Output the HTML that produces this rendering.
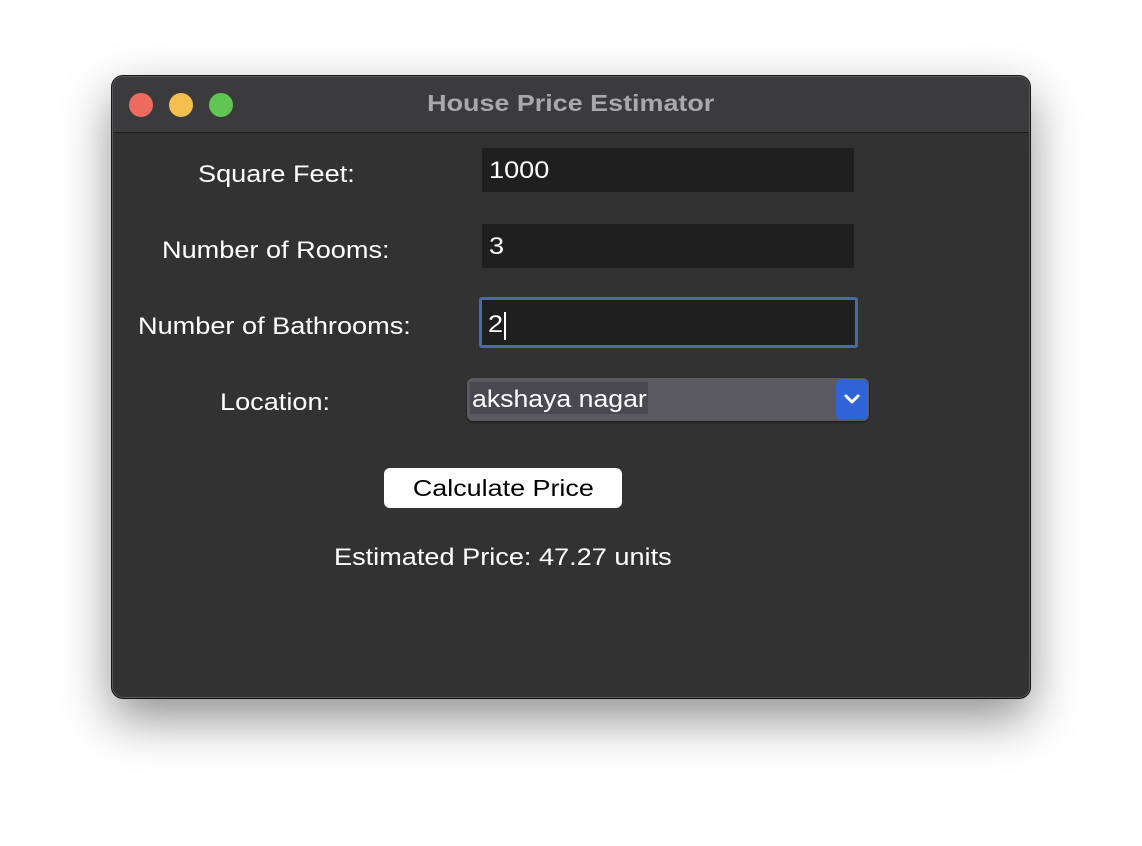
<!DOCTYPE html>
<html><head><style>
body{margin:0;width:1142px;height:846px;background:#fff;position:relative;overflow:hidden;font-family:"Liberation Sans",sans-serif;}
.win{position:absolute;left:112px;top:76px;width:916px;height:620px;background:#323232;border:1px solid #5a5a5a;border-radius:11px;box-shadow:0 20px 50px rgba(0,0,0,0.45),0 0 0 1px #1a1a1a;overflow:hidden;}
.tb{position:absolute;left:0;top:0;width:100%;height:55px;background:#3b3b3d;border-bottom:1px solid #1c1c1c;}
.dot{position:absolute;top:16px;width:24px;height:24px;border-radius:50%;}
.title{position:absolute;left:0;width:100%;top:13px;text-align:center;font-weight:bold;font-size:23px;color:#a9a9ab;}
.title span{display:inline-block;transform:scaleX(1.17);}
.t{position:absolute;color:#fff;font-size:24px;transform:scaleX(1.13);transform-origin:left;white-space:nowrap;}
.e{position:absolute;background:#1f1f1f;color:#fff;font-size:24px;box-sizing:border-box;padding-left:7px;}
.s{display:inline-block;transform:scaleX(1.13);transform-origin:left;white-space:nowrap;}
</style></head><body>
<div class="win">
<div class="tb">
<div class="dot" style="left:16px;background:#ec6a5e"></div>
<div class="dot" style="left:56px;background:#f4bf4f"></div>
<div class="dot" style="left:96px;background:#61c554"></div>
<div class="title"><span>House Price Estimator</span></div>
</div>
</div>
<div class="t" style="left:198px;top:161px">Square Feet:</div>
<div class="t" style="left:162px;top:237px">Number of Rooms:</div>
<div class="t" style="left:138px;top:313px">Number of Bathrooms:</div>
<div class="t" style="left:220px;top:389px">Location:</div>
<div class="e" style="left:482px;top:148px;width:372px;height:44px;line-height:46px;"><span class="s">1000</span></div>
<div class="e" style="left:482px;top:224px;width:372px;height:44px;line-height:46px;"><span class="s">3</span></div>
<div class="e" style="left:479px;top:297px;width:379px;height:51px;line-height:49px;border:3px solid #4a6b9e;border-radius:3px;padding-left:6px;"><span class="s">2</span><span style="display:inline-block;width:2px;height:28px;background:#fff;vertical-align:middle;margin-left:3px"></span></div>
<div style="position:absolute;left:467px;top:378px;width:402px;height:43px;background:#5b5a61;border-radius:6px;box-shadow:0 1px 2px rgba(0,0,0,.5)"></div>
<div style="position:absolute;left:470px;top:382px;width:178px;height:32px;background:#4a494f;color:#fff;font-size:24px;line-height:36px;"><span class="s" style="transform:scaleX(1.11);margin-left:2px">akshaya nagar</span></div>
<div style="position:absolute;left:836px;top:379px;width:32px;height:41px;background:#2f63d6;border-radius:6px;"><svg width="32" height="41"><path d="M10 17 L16 23 L22 17" stroke="#fff" stroke-width="3" fill="none" stroke-linecap="round" stroke-linejoin="round"/></svg></div>
<div style="position:absolute;left:384px;top:468px;width:238px;height:40px;background:#fff;border-radius:6px;color:#000;font-size:23px;text-align:center;line-height:40px;"><span style="display:inline-block;transform:scaleX(1.17)">Calculate Price</span></div>
<div class="t" style="left:334px;top:544px">Estimated Price: 47.27 units</div>
</body></html>
